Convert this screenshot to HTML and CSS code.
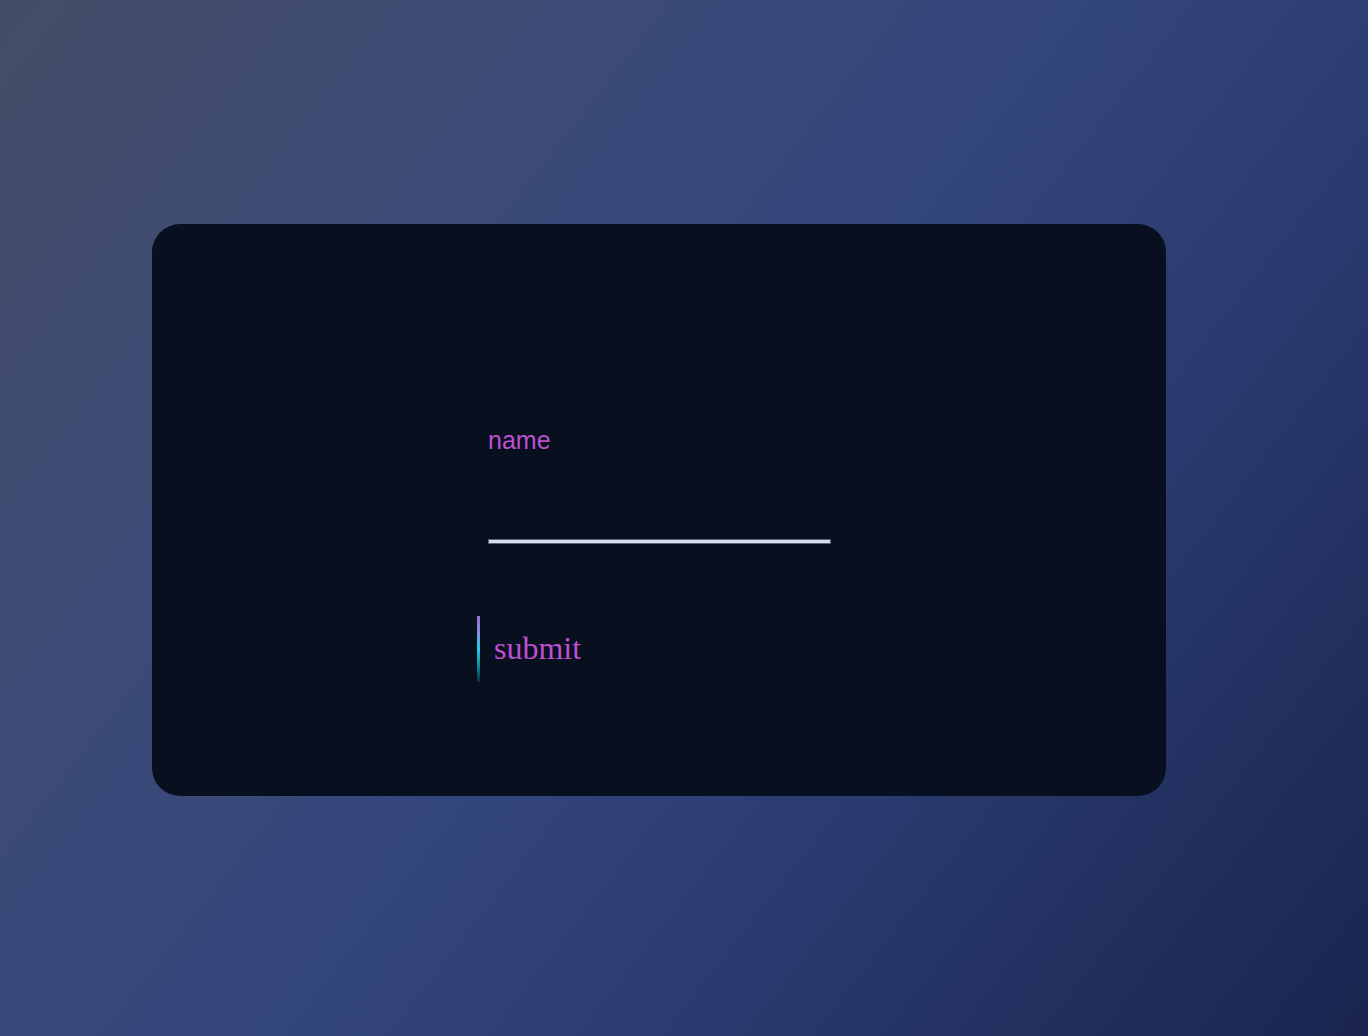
FILE: index.html
```html
<!DOCTYPE html>
<html>
<head>
<meta charset="utf-8">
<link rel="stylesheet" href="styles.css">
</head>
<body>
<main class="card">
  <form class="form">
    <label class="label">name</label>
    <div class="underline"></div>
    <button type="button" class="submit"><span class="bar"></span><span class="submit-text">submit</span></button>
  </form>
</main>
</body>
</html>
```

FILE: styles.css
```css
html, body {
  margin: 0;
  height: 100%;
}
body {
  background: linear-gradient(128deg, #444d67 0%, #3b4a78 30%, #33467c 50%, #293a6e 70%, #1a244f 100%);
  box-sizing: border-box;
  padding: 224px 0 0 152px;
}
.card {
  width: 1014px;
  height: 572px;
  box-sizing: border-box;
  background: #08101f;
  border-radius: 28px;
  padding: 202px 0 0 325px;
}
.form {
  display: flex;
  flex-direction: column;
  align-items: flex-start;
}
.label {
  margin-left: 11px;
  font-family: "Liberation Sans", Arial, sans-serif;
  font-size: 25px;
  line-height: 28px;
  color: #bf4fd1;
}
.underline {
  margin: 85px 0 0 11px;
  width: 341px;
  height: 3px;
  background: #d6ddef;
  border: 1px solid #59627a;
}
.submit {
  margin-top: 72px;
  display: flex;
  align-items: center;
  gap: 14px;
  height: 66px;
  padding: 0;
  background: none;
  border: 0;
  font-family: "Liberation Serif", "Times New Roman", serif;
  font-size: 32px;
  color: #bf4fd1;
}
.bar {
  width: 3px;
  height: 66px;
  background: linear-gradient(180deg, #9d6ad9 0%, #7f8ee0 25%, #22d0e4 50%, #138a9c 75%, #0b2a3a 100%);
}
.submit-text {
  line-height: 36px;
  margin-top: -2px;
}
```
